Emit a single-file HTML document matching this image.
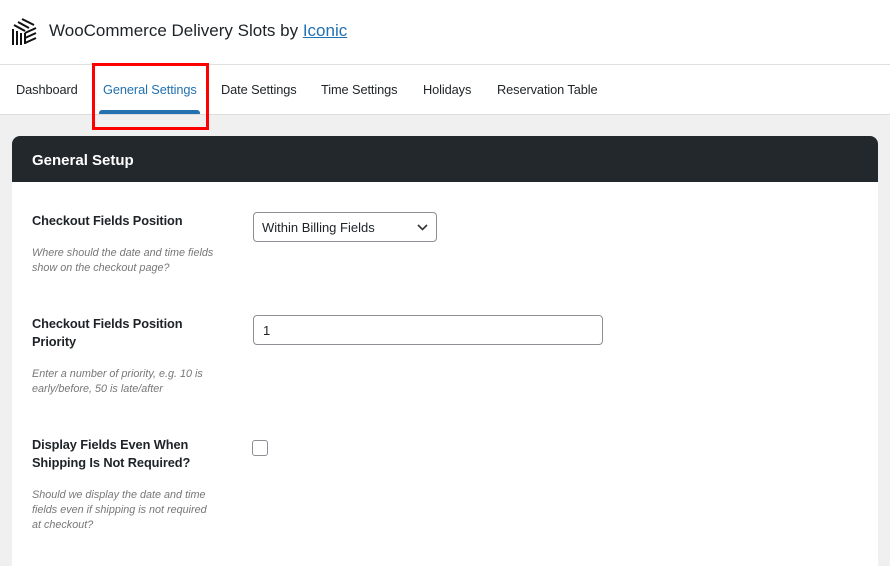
<!DOCTYPE html>
<html><head><style>
*{margin:0;padding:0;box-sizing:border-box}
body{width:890px;height:555px;overflow:hidden;background:#f0f0f1;font-family:"Liberation Sans",sans-serif;color:#1d2327;position:relative}
.top{position:absolute;left:0;top:0;width:890px;height:115px;background:#fff;border-bottom:1px solid #dcdcde}
.hr{position:absolute;left:0;top:64px;width:890px;height:1px;background:#e0e0e0}
.title{position:absolute;left:49px;top:21px;font-size:17px;color:#1d2327}
.title a{color:#2271b1;text-decoration:underline}
.tab{position:absolute;top:82px;font-size:12.8px;color:#1d2327;letter-spacing:-0.1px}
.card{position:absolute;left:12px;top:136px;width:866px;height:430px;background:#fff;border-radius:8px 8px 0 0;overflow:hidden}
.ch{height:46px;background:#23282d;color:#fff;font-weight:bold;font-size:15px;padding:16px 20px 0}
.lbl{position:absolute;left:32px;font-size:12.8px;font-weight:bold;line-height:18px;color:#1d2327;letter-spacing:-0.1px}
.desc{position:absolute;left:32px;font-size:10.8px;font-style:italic;color:#777;line-height:15px}
</style></head><body>
<div class="top"></div><div class="hr"></div>
<svg style="position:absolute;left:11px;top:18px" width="26" height="28" viewBox="0 0 26 28" stroke="#111" stroke-width="2" fill="none">
<line x1="2" y1="11" x2="2" y2="27"/><line x1="6" y1="13" x2="6" y2="27"/><line x1="10" y1="15" x2="10" y2="27"/>
<line x1="3" y1="7" x2="14" y2="13"/><line x1="7" y1="4" x2="18" y2="10"/><line x1="11" y1="1" x2="23" y2="7"/>
<line x1="14" y1="15" x2="25" y2="10"/><line x1="14" y1="20" x2="25" y2="15"/><line x1="14" y1="25" x2="25" y2="20"/>
<line x1="14" y1="15" x2="14" y2="26"/>
</svg>
<div class="title">WooCommerce Delivery Slots by <a>Iconic</a></div>
<div class="tab" style="left:16px">Dashboard</div>
<div class="tab" style="left:103px;color:#2271b1">General Settings</div>
<div style="position:absolute;left:99px;top:110px;width:101px;height:4px;background:#2271b1;border-radius:3px 3px 0 0"></div>
<div style="position:absolute;left:92px;top:63px;width:117px;height:67px;border:3px solid #f00"></div>
<div class="tab" style="left:221px">Date Settings</div>
<div class="tab" style="left:321px">Time Settings</div>
<div class="tab" style="left:423px">Holidays</div>
<div class="tab" style="left:497px">Reservation Table</div>
<div class="card"><div class="ch">General Setup</div></div>
<div class="lbl" style="top:212px">Checkout Fields Position</div>
<div class="desc" style="top:246px">Where should the date and time fields<br>show on the checkout page?</div>
<div style="position:absolute;left:253px;top:212px;width:184px;height:30px;border:1px solid #8c8f94;border-radius:4px;font-size:13px;padding:7px 8px">Within Billing Fields
<svg style="position:absolute;right:8px;top:11px" width="11" height="7" viewBox="0 0 11 7"><path d="M1 1l4.5 4.5L10 1" stroke="#333" stroke-width="1.6" fill="none"/></svg></div>
<div class="lbl" style="top:315px">Checkout Fields Position<br>Priority</div>
<div class="desc" style="top:367px">Enter a number of priority, e.g. 10 is<br>early/before, 50 is late/after</div>
<div style="position:absolute;left:253px;top:315px;width:350px;height:30px;border:1px solid #8c8f94;border-radius:4px;font-size:13px;padding:7px 9px">1</div>
<div class="lbl" style="top:436px">Display Fields Even When<br>Shipping Is Not Required?</div>
<div class="desc" style="top:488px">Should we display the date and time<br>fields even if shipping is not required<br>at checkout?</div>
<div style="position:absolute;left:252px;top:440px;width:16px;height:16px;border:1px solid #8c8f94;border-radius:3px"></div>
</body></html>
